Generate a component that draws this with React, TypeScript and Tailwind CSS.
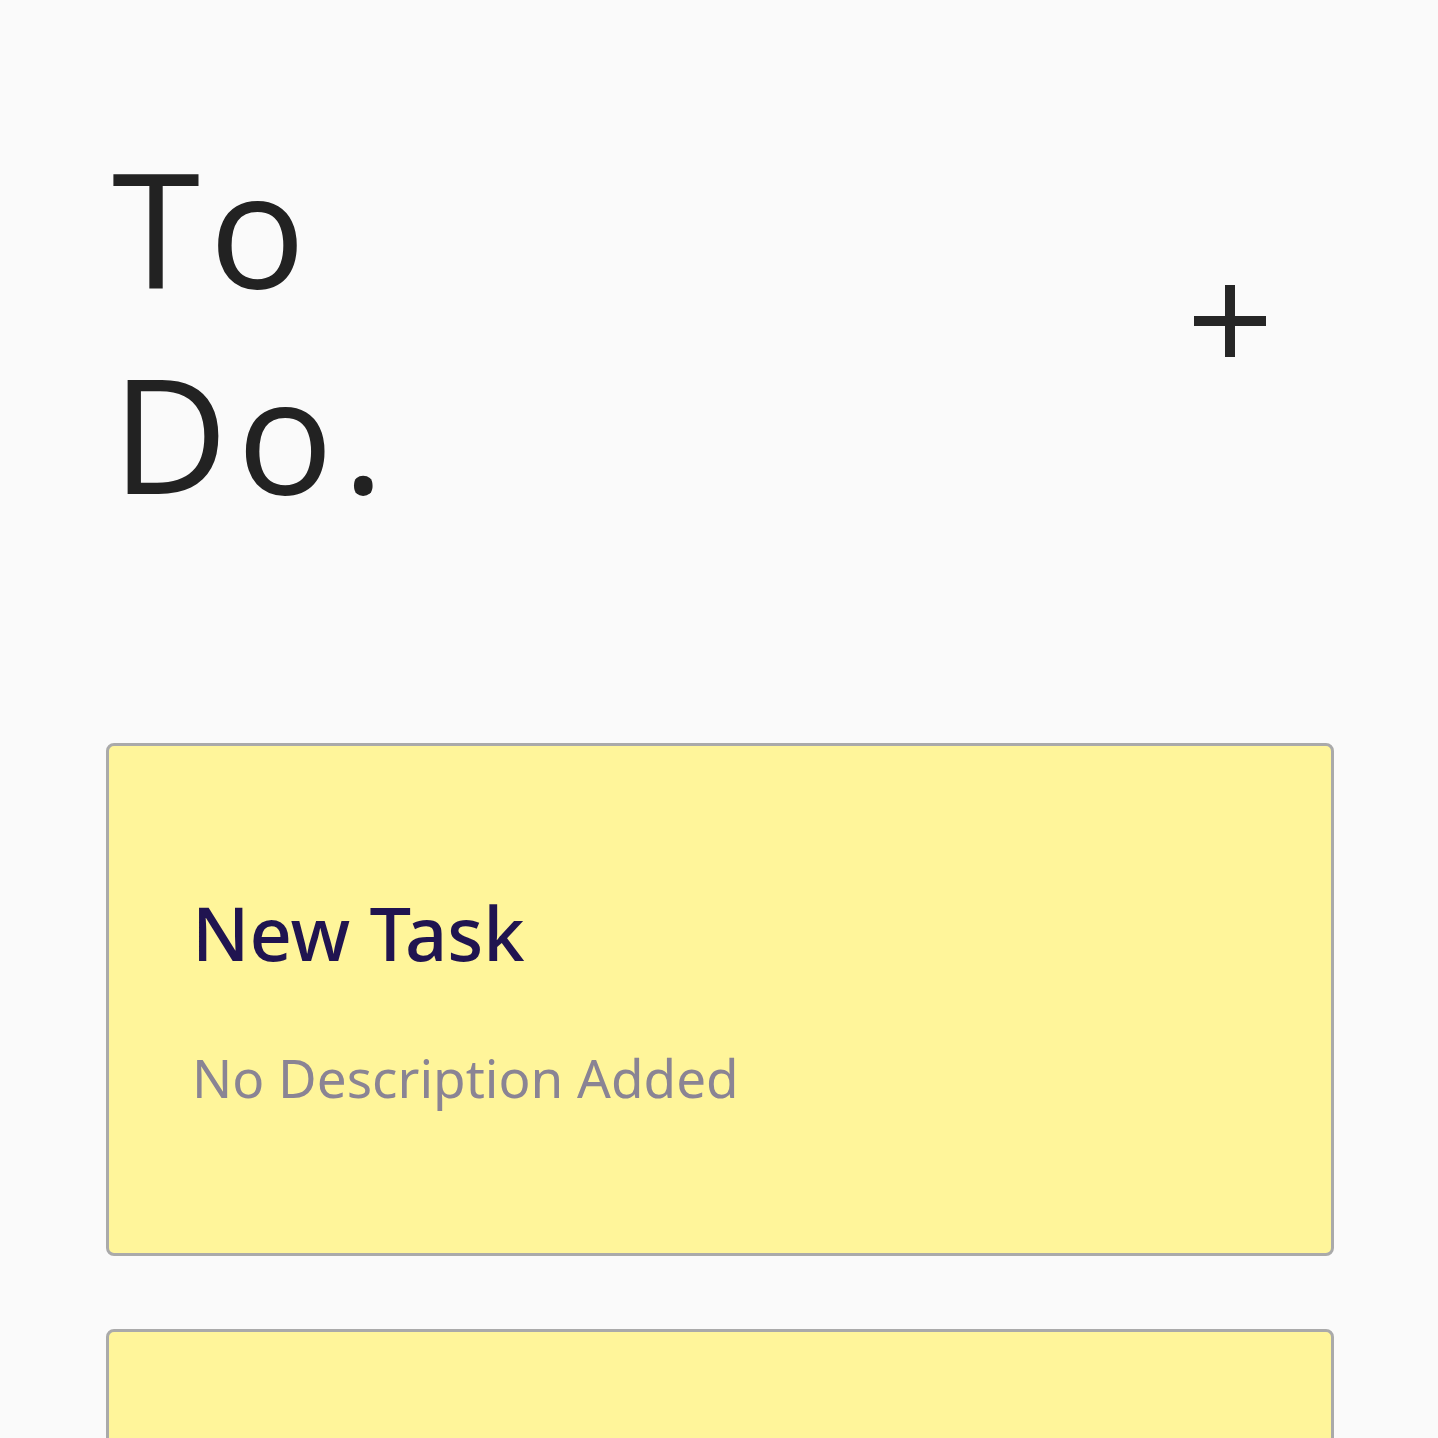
const tasks = [
  { title: "New Task", description: "No Description Added" },
  { title: "New Task", description: "No Description Added" },
];

function PlusIcon() {
  return (
    <svg width="76" height="76" viewBox="0 0 76 76" fill="none">
      <path d="M38 2v72M2 38h72" stroke="#262626" strokeWidth="10" />
    </svg>
  );
}

function TaskCard({ title, description }: { title: string; description: string }) {
  return (
    <div className="rounded-[8px] border-[3px] border-[#aaaaaa] bg-[#fff59a] pl-[83px] pr-10 pt-[135px] pb-[139px]">
      <h3 className="text-[74px] leading-[103px] font-medium text-[#201450]">{title}</h3>
      <p className="mt-[58px] text-[53px] leading-[72px] text-[#8a8494]">{description}</p>
    </div>
  );
}

export default function App() {
  return (
    <main className="min-h-screen w-full bg-[#fafafa] font-['Noto_Sans',sans-serif]">
      <div className="pl-[106px] pr-[104px] pt-[123px]">
        <div className="flex items-center justify-between">
          <h1 className="font-['Open_Sans',sans-serif] text-[160px] leading-[206px] tracking-[9px] text-[#222222] pl-[6px]">
            To
            <br />
            Do.
          </h1>
          <button type="button" className="mr-[66px] mt-[-16px]">
            <PlusIcon />
          </button>
        </div>
        <div className="mt-[208px] flex flex-col gap-[73px]">
          {tasks.map((task, i) => (
            <TaskCard key={i} title={task.title} description={task.description} />
          ))}
        </div>
      </div>
    </main>
  );
}
